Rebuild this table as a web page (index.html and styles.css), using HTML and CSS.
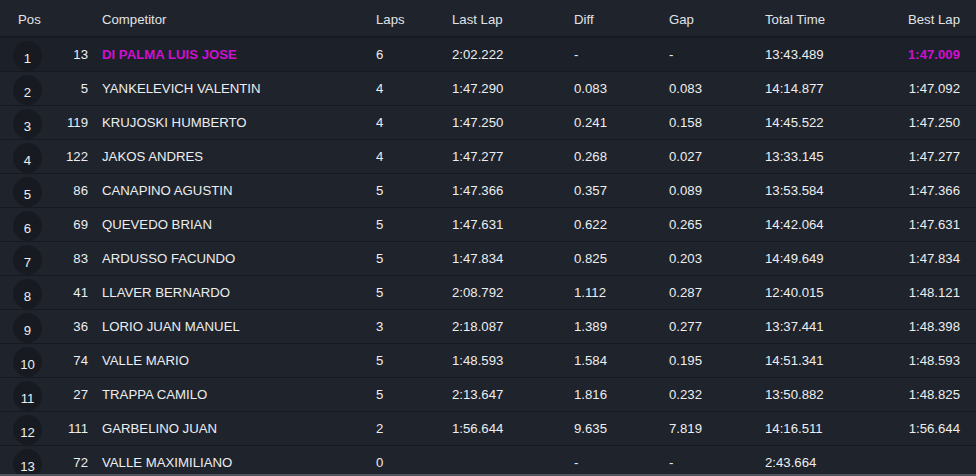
FILE: index.html
```html
<!DOCTYPE html>
<html lang="en">
<head>
<meta charset="utf-8">
<title>Results</title>
<link rel="stylesheet" href="styles.css">
</head>
<body>
<div class="board">
  <div class="row head">
    <div class="c-pos">Pos</div>
    <div class="c-num"></div>
    <div class="c-name">Competitor</div>
    <div>Laps</div>
    <div>Last Lap</div>
    <div>Diff</div>
    <div>Gap</div>
    <div>Total Time</div>
    <div class="c-best">Best Lap</div>
  </div>
  <div class="row first">
    <div class="c-pos"><span class="dot">1</span></div><div class="c-num">13</div><div class="c-name hi">DI PALMA LUIS JOSE</div><div>6</div><div>2:02.222</div><div>-</div><div>-</div><div>13:43.489</div><div class="c-best hi">1:47.009</div>
  </div>
  <div class="row">
    <div class="c-pos"><span class="dot">2</span></div><div class="c-num">5</div><div class="c-name">YANKELEVICH VALENTIN</div><div>4</div><div>1:47.290</div><div>0.083</div><div>0.083</div><div>14:14.877</div><div class="c-best">1:47.092</div>
  </div>
  <div class="row">
    <div class="c-pos"><span class="dot">3</span></div><div class="c-num">119</div><div class="c-name">KRUJOSKI HUMBERTO</div><div>4</div><div>1:47.250</div><div>0.241</div><div>0.158</div><div>14:45.522</div><div class="c-best">1:47.250</div>
  </div>
  <div class="row">
    <div class="c-pos"><span class="dot">4</span></div><div class="c-num">122</div><div class="c-name">JAKOS ANDRES</div><div>4</div><div>1:47.277</div><div>0.268</div><div>0.027</div><div>13:33.145</div><div class="c-best">1:47.277</div>
  </div>
  <div class="row">
    <div class="c-pos"><span class="dot">5</span></div><div class="c-num">86</div><div class="c-name">CANAPINO AGUSTIN</div><div>5</div><div>1:47.366</div><div>0.357</div><div>0.089</div><div>13:53.584</div><div class="c-best">1:47.366</div>
  </div>
  <div class="row">
    <div class="c-pos"><span class="dot">6</span></div><div class="c-num">69</div><div class="c-name">QUEVEDO BRIAN</div><div>5</div><div>1:47.631</div><div>0.622</div><div>0.265</div><div>14:42.064</div><div class="c-best">1:47.631</div>
  </div>
  <div class="row">
    <div class="c-pos"><span class="dot">7</span></div><div class="c-num">83</div><div class="c-name">ARDUSSO FACUNDO</div><div>5</div><div>1:47.834</div><div>0.825</div><div>0.203</div><div>14:49.649</div><div class="c-best">1:47.834</div>
  </div>
  <div class="row">
    <div class="c-pos"><span class="dot">8</span></div><div class="c-num">41</div><div class="c-name">LLAVER BERNARDO</div><div>5</div><div>2:08.792</div><div>1.112</div><div>0.287</div><div>12:40.015</div><div class="c-best">1:48.121</div>
  </div>
  <div class="row">
    <div class="c-pos"><span class="dot">9</span></div><div class="c-num">36</div><div class="c-name">LORIO JUAN MANUEL</div><div>3</div><div>2:18.087</div><div>1.389</div><div>0.277</div><div>13:37.441</div><div class="c-best">1:48.398</div>
  </div>
  <div class="row">
    <div class="c-pos"><span class="dot">10</span></div><div class="c-num">74</div><div class="c-name">VALLE MARIO</div><div>5</div><div>1:48.593</div><div>1.584</div><div>0.195</div><div>14:51.341</div><div class="c-best">1:48.593</div>
  </div>
  <div class="row">
    <div class="c-pos"><span class="dot">11</span></div><div class="c-num">27</div><div class="c-name">TRAPPA CAMILO</div><div>5</div><div>2:13.647</div><div>1.816</div><div>0.232</div><div>13:50.882</div><div class="c-best">1:48.825</div>
  </div>
  <div class="row">
    <div class="c-pos"><span class="dot">12</span></div><div class="c-num">111</div><div class="c-name">GARBELINO JUAN</div><div>2</div><div>1:56.644</div><div>9.635</div><div>7.819</div><div>14:16.511</div><div class="c-best">1:56.644</div>
  </div>
  <div class="row">
    <div class="c-pos"><span class="dot">13</span></div><div class="c-num">72</div><div class="c-name">VALLE MAXIMILIANO</div><div>0</div><div></div><div>-</div><div>-</div><div>2:43.664</div><div class="c-best"></div>
  </div>
</div>
</body>
</html>
```
FILE: styles.css
```css
html, body {
  margin: 0;
  padding: 0;
  background: #1f232b;
}
body {
  font-family: "Liberation Sans", Arial, sans-serif;
  font-size: 13.2px;
  color: #eceef0;
  width: 976px;
  height: 476px;
  overflow: hidden;
}
.board {
  height: 474px;
  overflow: hidden;
  border-bottom: 2px solid #50555d;
  background: #1f232b;
}
.row {
  display: grid;
  grid-template-columns: 60px 28px 288px 76px 122px 95px 96px 91px 1fr;
  align-items: center;
  height: 33px;
  border-bottom: 1px solid #161a20;
  background: #1f232b;
}
.row.head {
  height: 33px;
  padding-top: 3px;
  border-bottom: 2px solid #171b21;
  color: #e0e3e8;
}
.row.first {
  background: #1c2028;
}
.c-pos {
  padding-left: 13px;
  display: flex;
  align-items: center;
}
.head .c-pos {
  padding-left: 18px;
}
.dot {
  width: 29px;
  height: 30px;
  border-radius: 50%;
  background: #171b21;
  display: flex;
  justify-content: center;
  align-items: center;
  padding-top: 5px;
  box-sizing: border-box;
  margin-top: 2px;
}
.c-num {
  text-align: right;
}
.c-name {
  padding-left: 14px;
}
.c-best {
  text-align: right;
  padding-right: 16px;
}
.hi {
  color: #cf0fd0;
  font-weight: bold;
}
```
